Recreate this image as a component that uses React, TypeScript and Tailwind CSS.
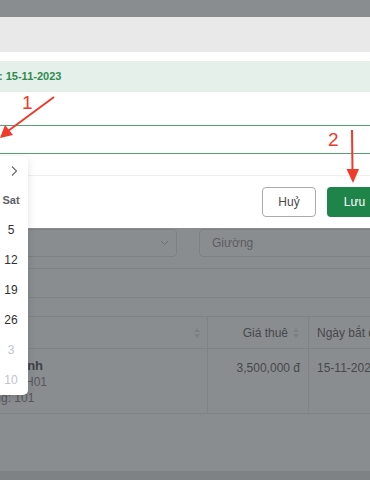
import React from "react";

const SortIcon = () => (
  <svg width="8" height="12" viewBox="0 0 8 12" className="shrink-0">
    <path d="M4 1 L7 5 L1 5 Z" fill="#7d8083" />
    <path d="M4 11 L7 7 L1 7 Z" fill="#7d8083" />
  </svg>
);

export default function App() {
  const days = [
    { t: "5", muted: false },
    { t: "12", muted: false },
    { t: "19", muted: false },
    { t: "26", muted: false },
    { t: "3", muted: true },
    { t: "10", muted: true },
  ];
  return (
    <div
      className="relative w-[370px] h-[480px] overflow-hidden bg-[#8a8d90] flex flex-col"
      style={{ fontFamily: '"Liberation Sans", Arial, sans-serif' }}
    >
      {/* top overlay strip */}
      <div className="h-[17px] shrink-0" />

      {/* modal */}
      <div className="h-[211px] shrink-0 bg-white flex flex-col">
        <div className="h-[35px] bg-[#e9e9e9] shrink-0" />
        <div className="h-[9px] shrink-0" />
        <div className="h-[31px] shrink-0 bg-[#e4f0e9] flex items-center">
          <span className="-ml-[1px] text-[11px] font-bold text-[#2f8a50]">: 15-11-2023</span>
        </div>
        <div className="h-[33px] shrink-0" />
        <div className="-ml-[10px] w-[390px] h-[29px] shrink-0 border border-[#55a271] rounded-[3px] bg-white" />
        <div className="h-[22px] shrink-0 border-b border-[#eeeeee]" />
        <div className="flex-1 flex items-center justify-end gap-[11px] -mr-[12px]">
          <button className="w-[54px] h-[30px] rounded-[4px] border border-[#a9abad] bg-white text-[12px] text-[#4a4a4a]">
            Huỷ
          </button>
          <button className="w-[55px] h-[30px] rounded-[4px] bg-[#1f8449] text-[12px] text-white">
            Lưu
          </button>
        </div>
      </div>

      {/* page content under overlay */}
      <div className="flex flex-col text-[#45484b]">
        <div className="h-[1px]" />
        <div className="flex gap-[22px] h-[28px]">
          <div className="shrink-0 -ml-[10px] w-[187px] border border-[#7e8184] rounded-[4px] flex items-center justify-end pr-[7px]">
            <svg width="9" height="6" viewBox="0 0 9 6">
              <path d="M1 1 L4.5 4.5 L8 1" stroke="#6a6d70" strokeWidth="1" fill="none" />
            </svg>
          </div>
          <div className="shrink-0 w-[190px] border border-[#7e8184] rounded-[4px] flex items-center pl-[12px] text-[12px] text-[#5a5d60]">
            Giường
          </div>
        </div>
        <div className="h-[11px]" />
        <div className="h-[29px] border-t border-[#808386]" />
        <div className="h-[19px] border-t border-[#808386]" />
        {/* table header */}
        <div className="flex h-[32px] border-t border-[#808386] text-[12px]">
          <div className="w-[208px] shrink-0 flex items-center justify-end pr-[6px] border-r border-[#808386]">
            <SortIcon />
          </div>
          <div className="w-[101px] shrink-0 flex items-center justify-end gap-[4px] pr-[8px] border-r border-[#808386]">
            <span>Giá thuê</span>
            <SortIcon />
          </div>
          <div className="flex items-center pl-[8px] whitespace-nowrap">Ngày bắt đầu</div>
        </div>
        {/* table row */}
        <div className="flex h-[66px] border-t border-b border-[#808386] text-[12px]">
          <div className="w-[208px] shrink-0 border-r border-[#808386] overflow-hidden">
            <div className="flex flex-col pt-[9px] -ml-[27px] leading-[16px]">
              <span className="font-bold text-[13px] text-[#3e4144] whitespace-nowrap">Trần Thanh</span>
              <span className="whitespace-nowrap text-[#55585b]">Mã HĐ: PH01</span>
              <span className="whitespace-nowrap text-[#55585b]">Phòng: 101</span>
            </div>
          </div>
          <div className="w-[101px] shrink-0 border-r border-[#808386] flex justify-end pr-[8px] pt-[10px]">
            3,500,000 đ
          </div>
          <div className="pl-[8px] pt-[10px] whitespace-nowrap">15-11-2022</div>
        </div>
        <div className="h-[57px]" />
        <div className="h-[20px] bg-[#7f8285]" />
      </div>

      {/* date picker popup */}
      <div className="absolute left-[-6px] top-[156px] w-[34px] h-[239px] bg-white rounded-r-[5px] shadow-[0_2px_8px_rgba(0,0,0,0.12)] flex flex-col items-center">
        <div className="h-[30px] flex items-center pl-[6px]">
          <svg width="8" height="12" viewBox="0 0 8 12">
            <path d="M2 1.5 L6.5 6 L2 10.5" stroke="#666" strokeWidth="1.1" fill="none" />
          </svg>
        </div>
        <div className="h-[29px] flex items-center text-[11px] font-bold text-[#606266]">Sat</div>
        {days.map((d) => (
          <div
            key={d.t}
            className={`h-[30px] flex items-center text-[12px] ${d.muted ? "text-[#c0c4cc]" : "text-[#303133]"}`}
          >
            {d.t}
          </div>
        ))}
      </div>

      {/* annotation arrows */}
      <svg className="absolute left-0 top-0 pointer-events-none" width="370" height="480" viewBox="0 0 370 480">
        <line x1="54" y1="97" x2="8" y2="131" stroke="#f03a2b" strokeWidth="2" />
        <path d="M0 138 L5 125 L13 135 Z" fill="#f03a2b" />
        <line x1="352" y1="130" x2="352.5" y2="172" stroke="#f03a2b" strokeWidth="2" />
        <path d="M346.5 169 L359 169 L353 183 Z" fill="#f03a2b" />
      </svg>
      <span className="absolute left-[22px] top-[93px] text-[19px] leading-[20px] text-[#f03a2b]">1</span>
      <span className="absolute left-[328px] top-[130px] text-[19px] leading-[20px] text-[#f03a2b]">2</span>
    </div>
  );
}
